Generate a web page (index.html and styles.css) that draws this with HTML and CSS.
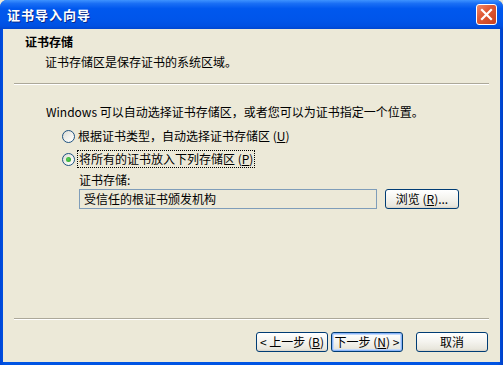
FILE: index.html
```html
<!DOCTYPE html>
<html lang="zh-CN">
<head>
    <meta charset="UTF-8">
    <title>证书导入向导</title>
    <link rel="stylesheet" href="styles.css">
</head>
<body>
    <div class="window">
        <div class="titlebar">
            <span class="title">证书导入向导</span>
            <button class="close" aria-label="关闭">
                <svg width="13" height="13" viewBox="0 0 13 13">
                    <path d="M2 2 L11 11 M11 2 L2 11" stroke="#fff" stroke-width="2.2" stroke-linecap="square"/>
                </svg>
            </button>
        </div>

        <div class="client">
            <div class="header">
                <div class="header-title">证书存储</div>
                <div class="header-sub">证书存储区是保存证书的系统区域。</div>
            </div>
            <div class="sep"></div>

            <div class="body">
                <p class="intro">Windows 可以自动选择证书存储区，或者您可以为证书指定一个位置。</p>

                <div class="option">
                    <span class="radio"></span>
                    <span class="label">根据证书类型，自动选择证书存储区 (<u>U</u>)</span>
                </div>
                <div class="option">
                    <span class="radio checked"></span>
                    <span class="label focused">将所有的证书放入下列存储区 (<u>P</u>)</span>
                </div>

                <div class="store">
                    <div class="store-label">证书存储:</div>
                    <div class="store-row">
                        <div class="store-box">受信任的根证书颁发机构</div>
                        <button class="btn btn-browse">浏览 (<u>R</u>)...</button>
                    </div>
                </div>
            </div>

            <div class="sep"></div>
            <div class="footer">
                <button class="btn">&lt; 上一步 (<u>B</u>)</button>
                <button class="btn btn-default">下一步 (<u>N</u>) &gt;</button>
                <button class="btn btn-cancel">取消</button>
            </div>
        </div>
    </div>
</body>
</html>
```

FILE: styles.css
```css
* {
    margin: 0;
    padding: 0;
    box-sizing: border-box;
}

body {
    font-family: "Noto Sans CJK SC", "DejaVu Sans", sans-serif;
    font-size: 12px;
    color: #000;
    background: #ECE9D8;
}

.window {
    width: 503px;
    height: 365px;
    background: linear-gradient(to right, #0046D8 0%, #0054E3 1%, #0054E3 99%, #0040C8 100%);
    border-radius: 7px 7px 0 0;
    display: flex;
    flex-direction: column;
    overflow: hidden;
}

.titlebar {
    height: 29px;
    display: flex;
    align-items: center;
    justify-content: space-between;
    padding: 0 6px 0 7px;
    background: linear-gradient(to bottom, #3E93FF 0%, #1A6FF5 12%, #0058EE 30%, #0055EA 70%, #0050E2 90%, #0046D0 100%);
}

.title {
    color: #fff;
    font-weight: bold;
    font-size: 13px;
    letter-spacing: 1px;
    text-shadow: 1px 1px #0A2A8C;
}

.close {
    width: 21px;
    height: 21px;
    border: 1px solid #fff;
    border-radius: 3px;
    background: linear-gradient(135deg, #F0896A 0%, #E05A36 40%, #C8401E 100%);
    display: flex;
    align-items: center;
    justify-content: center;
}

.client {
    flex: 1;
    margin: 0 3px 3px 3px;
    background: #ECE9D8;
    display: flex;
    flex-direction: column;
}

.header {
    padding: 5px 0 0 22px;
    line-height: 16px;
}

.header-title {
    font-weight: bold;
}

.header-sub {
    margin-top: 4px;
    padding-left: 20px;
}

.sep {
    height: 2px;
    margin: 13px 11px 0 11px;
    border-top: 1px solid #ACA899;
    border-bottom: 1px solid #fff;
}

.body {
    flex: 1;
    padding: 19px 0 0 43px;
    line-height: 16px;
}

.option {
    display: flex;
    align-items: center;
    margin-left: 16px;
    height: 16px;
    margin-top: 7px;
}

.intro + .option {
    margin-top: 8px;
}

.radio {
    width: 13px;
    height: 13px;
    border: 1px solid #1C5180;
    border-radius: 50%;
    background: linear-gradient(135deg, #DCDCD4 0%, #F4F4F0 60%, #fff 100%);
    display: flex;
    align-items: center;
    justify-content: center;
    margin-right: 3px;
}

.radio.checked::after {
    content: "";
    width: 5px;
    height: 5px;
    border-radius: 50%;
    background: radial-gradient(circle at 40% 40%, #5AD05A, #1E9A1E);
}

.label u {
    text-decoration: underline;
}

.focused {
    outline: 1px dotted #000;
    outline-offset: 0;
    padding: 0 1px;
}

.store {
    margin: 5px 0 0 33px;
}

.store-row {
    display: flex;
    align-items: center;
    gap: 8px;
    margin-top: 1px;
}

.store-box {
    width: 298px;
    height: 20px;
    border: 1px solid #7F9DB9;
    padding: 1px 4px;
    line-height: 16px;
}

.btn {
    width: 72px;
    height: 20px;
    font-family: inherit;
    font-size: 12px;
    color: #000;
    border: 1px solid #003C74;
    border-radius: 3px;
    background: linear-gradient(to bottom, #FFFFFF 0%, #F4F3EE 50%, #E8E6DC 90%, #D6D0C5 100%);
    line-height: 16px;
}

.btn-browse {
    width: 74px;
}

.btn-default {
    box-shadow: inset 0 0 0 1px #8AB4F8, inset 0 0 0 2px #C4DAFB;
}

.footer {
    display: flex;
    justify-content: flex-end;
    padding: 12px 12px 10px 0;
    gap: 3px;
}

.btn-cancel {
    margin-left: 10px;
}
```
